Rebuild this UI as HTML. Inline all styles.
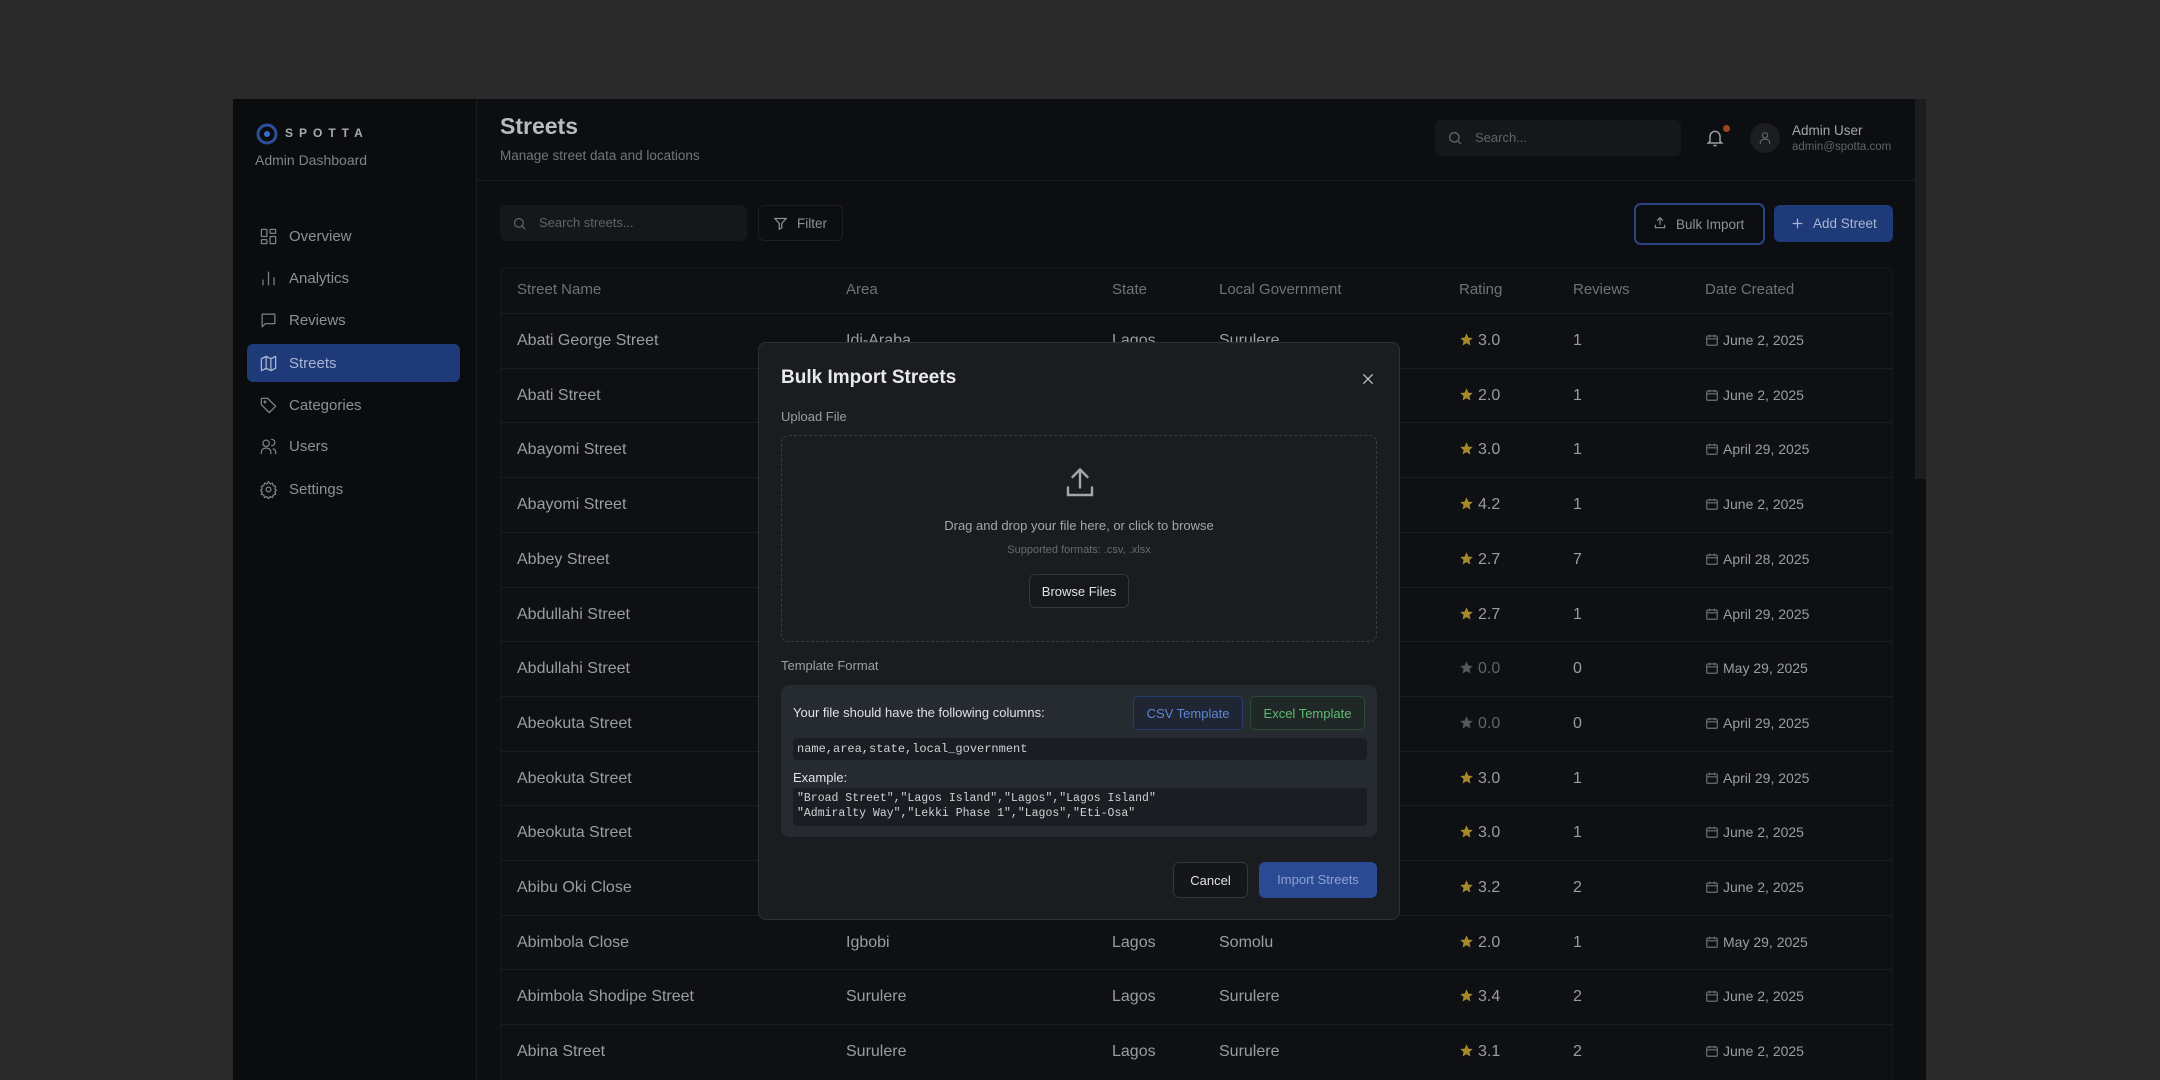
<!DOCTYPE html>
<html><head><meta charset="utf-8"><style>
*{box-sizing:border-box;margin:0;padding:0}
body{width:2160px;height:1080px;background:#2a2a2a;font-family:"Liberation Sans",sans-serif;position:relative;overflow:hidden}
.a{position:absolute}
.app{left:233px;top:99px;width:1693px;height:981px;background:#0d0e11;overflow:hidden}
.side{left:0;top:0;width:244px;height:981px;background:#0b0c0e;border-right:1px solid #1a1c20}
.nav{left:14px;width:213px;height:38px;border-radius:6px;color:#8d9097;font-size:15px;display:flex;align-items:center;padding-left:12px;gap:11px}
.nav svg{width:19px;height:19px;stroke:#7d8087;fill:none;stroke-width:1.6;stroke-linecap:round;stroke-linejoin:round}
.act{background:#1e3a78;color:#a9b6d2}
.act svg{stroke:#a9b6d2}
.t{color:#9a9da3;font-size:16px;white-space:nowrap}
.h{color:#6e727a;font-size:15px}
.row{left:267px;width:1393px;height:55px;border-top:1px solid #1a1c20}
.star{display:inline-block;width:15px;height:15px;vertical-align:-2px;margin-right:4px}
.cal{display:inline-block;width:14px;height:14px;vertical-align:-2px;margin-right:4px}
.m{left:758px;top:342px;width:642px;height:578px;background:#1a1c20;border:1px solid #2d3036;border-radius:8px}
.mono{font-family:"Liberation Mono",monospace;font-size:12.5px;color:#cfd2d6;white-space:nowrap}
.btn{white-space:nowrap}
</style></head><body>
<div class="a app">
 <div class="a side">
  <svg class="a" style="left:22px;top:23px" width="24" height="24" viewBox="0 0 24 24"><circle cx="12" cy="12" r="9" fill="none" stroke="#2c4f9c" stroke-width="3"/><circle cx="12" cy="12" r="3" fill="#3a6bd0"/></svg>
  <div class="a" style="left:52px;top:27px;color:#a8abb0;font-size:12px;font-weight:bold;letter-spacing:6px">SPOTTA</div>
  <div class="a" style="left:22px;top:53px;color:#7f838a;font-size:14px">Admin Dashboard</div>
  <div class="a nav" style="top:118px"><svg viewBox="0 0 24 24"><rect x="3" y="3" width="7" height="9" rx="1"/><rect x="14" y="3" width="7" height="5" rx="1"/><rect x="14" y="12" width="7" height="9" rx="1"/><rect x="3" y="16" width="7" height="5" rx="1"/></svg>Overview</div>
  <div class="a nav" style="top:160px"><svg viewBox="0 0 24 24"><path d="M5 20v-6M12 20V4M19 20v-9"/></svg>Analytics</div>
  <div class="a nav" style="top:202px"><svg viewBox="0 0 24 24"><path d="M4 4h16v12H8l-4 4z"/></svg>Reviews</div>
  <div class="a nav act" style="top:245px"><svg viewBox="0 0 24 24"><path d="M3 6l6-3 6 3 6-3v15l-6 3-6-3-6 3zM9 3v15M15 6v15"/></svg>Streets</div>
  <div class="a nav" style="top:287px"><svg viewBox="0 0 24 24"><path d="M3 3h8l10 10-8 8L3 11z"/><circle cx="7.5" cy="7.5" r="1"/></svg>Categories</div>
  <div class="a nav" style="top:328px"><svg viewBox="0 0 24 24"><circle cx="9" cy="8" r="4"/><path d="M3 21v-2a5 5 0 0 1 5-5h2a5 5 0 0 1 5 5v2M16 3a4 4 0 0 1 0 8M21 21v-2a4 4 0 0 0-3-4"/></svg>Users</div>
  <div class="a nav" style="top:371px"><svg viewBox="0 0 24 24"><circle cx="12" cy="12" r="3"/><path d="M12 2l2 3 3-1 1 3 3 1-1 3 2 2-2 2 1 3-3 1-1 3-3-1-2 3-2-3-3 1-1-3-3-1 1-3-2-2 2-2-1-3 3-1 1-3 3 1z"/></svg>Settings</div>
 </div>
 <div class="a" style="left:267px;top:14px;color:#b8bbc0;font-size:23px;font-weight:bold">Streets</div>
 <div class="a" style="left:267px;top:49px;color:#71757c;font-size:13.5px">Manage street data and locations</div>
 <div class="a" style="left:244px;top:81px;width:1449px;height:1px;background:#1a1c20"></div>
 <div class="a" style="left:1202px;top:21px;width:246px;height:36px;background:#15171a;border-radius:6px"></div>
 <svg class="a" style="left:1214px;top:31px" width="16" height="16" viewBox="0 0 24 24" fill="none" stroke="#5f636a" stroke-width="2"><circle cx="11" cy="11" r="7"/><path d="M16 16l5 5"/></svg>
 <div class="a" style="left:1242px;top:31px;color:#5f636a;font-size:13px">Search...</div>
 <svg class="a" style="left:1472px;top:29px" width="20" height="20" viewBox="0 0 24 24" fill="none" stroke="#9a9da3" stroke-width="1.8"><path d="M6 16V10a6 6 0 0 1 12 0v6l2 2H4zM10 21h4"/></svg>
 <div class="a" style="left:1490px;top:26px;width:7px;height:7px;border-radius:50%;background:#a0431f"></div>
 <div class="a" style="left:1517px;top:24px;width:30px;height:30px;border-radius:50%;background:#1b1d21"></div>
 <svg class="a" style="left:1524px;top:31px" width="16" height="16" viewBox="0 0 24 24" fill="none" stroke="#5f636a" stroke-width="1.8"><circle cx="12" cy="8" r="4"/><path d="M5 21v-2a5 5 0 0 1 5-5h4a5 5 0 0 1 5 5v2"/></svg>
 <div class="a" style="left:1559px;top:24px;color:#a3a6ab;font-size:13.5px">Admin User</div>
 <div class="a" style="left:1559px;top:42px;color:#5f636a;font-size:11.5px">admin@spotta.com</div>

 <div class="a" style="left:267px;top:106px;width:247px;height:36px;background:#15171a;border-radius:6px"></div>
 <svg class="a" style="left:279px;top:117px" width="15" height="15" viewBox="0 0 24 24" fill="none" stroke="#5f636a" stroke-width="2"><circle cx="11" cy="11" r="7"/><path d="M16 16l5 5"/></svg>
 <div class="a" style="left:306px;top:116px;color:#5f636a;font-size:13px">Search streets...</div>
 <div class="a" style="left:525px;top:106px;width:85px;height:36px;border:1px solid #1d1f23;border-radius:6px;color:#8d9097;font-size:13.5px;padding:10px 0 0 38px">Filter</div>
 <svg class="a" style="left:540px;top:117px" width="15" height="15" viewBox="0 0 24 24" fill="none" stroke="#8d9097" stroke-width="2"><path d="M3 4h18l-7 8v7l-4 2v-9z"/></svg>
 <div class="a btn" style="left:1401px;top:104px;width:131px;height:42px;border:2px solid #2a4580;border-radius:7px;background:#0c0d10;color:#8d9097;font-size:13.5px;padding:12px 0 0 40px">Bulk Import</div>
 <svg class="a" style="left:1420px;top:117px" width="14" height="14" viewBox="0 0 24 24" fill="none" stroke="#8d9097" stroke-width="2"><path d="M12 15V3M7 8l5-5 5 5M4 15v5h16v-5"/></svg>
 <div class="a btn" style="left:1541px;top:106px;width:119px;height:37px;background:#1e3a78;border-radius:6px;color:#a9b6d2;font-size:13.5px;padding:11px 0 0 39px">Add Street</div>
 <svg class="a" style="left:1558px;top:118px" width="13" height="13" viewBox="0 0 24 24" fill="none" stroke="#a9b6d2" stroke-width="2.2"><path d="M12 3v18M3 12h18"/></svg>

 <div class="a" style="left:267px;top:168px;width:1393px;height:820px;background:#0f1013;border:1px solid #17191c;border-radius:6px"></div>
 <div class="a h" style="left:284px;top:182px">Street Name</div>
 <div class="a h" style="left:613px;top:182px">Area</div>
 <div class="a h" style="left:879px;top:182px">State</div>
 <div class="a h" style="left:986px;top:182px">Local Government</div>
 <div class="a h" style="left:1226px;top:182px">Rating</div>
 <div class="a h" style="left:1340px;top:182px">Reviews</div>
 <div class="a h" style="left:1472px;top:182px">Date Created</div>
 <div id="rows"></div>
</div>

<div class="a m">
 <div class="a" style="left:22px;top:24px;color:#e8e9eb;font-size:19px;font-weight:bold">Bulk Import Streets</div>
 <svg class="a" style="left:601px;top:28px" width="16" height="16" viewBox="0 0 24 24" fill="none" stroke="#b8bbc0" stroke-width="2"><path d="M5 5l14 14M19 5L5 19"/></svg>
 <div class="a" style="left:22px;top:66px;color:#9a9da3;font-size:13px">Upload File</div>
 <div class="a" style="left:22px;top:92px;width:596px;height:207px;border:1.5px dashed #3a3d43;border-radius:8px"></div>
 <svg class="a" style="left:303px;top:122px" width="36" height="36" viewBox="0 0 24 24" fill="none" stroke="#a3a6ab" stroke-width="1.6" stroke-linecap="round"><path d="M12 15V3M7 8l5-5 5 5M4 15v5h16v-5"/></svg>
 <div class="a" style="left:0;width:640px;top:175px;text-align:center;color:#a3a6ab;font-size:13px">Drag and drop your file here, or click to browse</div>
 <div class="a" style="left:0;width:640px;top:201px;text-align:center;color:#676b72;font-size:11px">Supported formats: .csv, .xlsx</div>
 <div class="a btn" style="left:270px;top:231px;width:100px;height:34px;border:1px solid #33363c;border-radius:6px;background:#16181b;color:#e0e1e3;font-size:13px;text-align:center;padding-top:9px">Browse Files</div>
 <div class="a" style="left:22px;top:315px;color:#9a9da3;font-size:13px">Template Format</div>
 <div class="a" style="left:22px;top:342px;width:596px;height:152px;background:#262a31;border-radius:8px"></div>
 <div class="a" style="left:34px;top:362px;color:#e0e1e3;font-size:13px">Your file should have the following columns:</div>
 <div class="a btn" style="left:374px;top:353px;width:110px;height:34px;border:1px solid #273d6b;border-radius:5px;background:#1f2532;color:#5f86d6;font-size:13px;text-align:center;padding-top:9px">CSV Template</div>
 <div class="a btn" style="left:491px;top:353px;width:115px;height:34px;border:1px solid #2c4a35;border-radius:5px;background:#1f2826;color:#5fbb72;font-size:13px;text-align:center;padding-top:9px">Excel Template</div>
 <div class="a mono" style="left:34px;top:395px;width:574px;height:22px;background:#1a1d22;border-radius:4px;padding:4px 4px;font-size:12px">name,area,state,local_government</div>
 <div class="a" style="left:34px;top:427px;color:#e0e1e3;font-size:13px">Example:</div>
 <div class="a mono" style="left:34px;top:445px;width:574px;height:38px;background:#1a1d22;border-radius:4px;padding:3px 4px;line-height:15px;font-size:11.5px">"Broad Street","Lagos Island","Lagos","Lagos Island"<br>"Admiralty Way","Lekki Phase 1","Lagos","Eti-Osa"</div>
 <div class="a btn" style="left:414px;top:519px;width:75px;height:36px;border:1px solid #33363c;border-radius:6px;background:#141619;color:#e0e1e3;font-size:13px;text-align:center;padding-top:10px">Cancel</div>
 <div class="a btn" style="left:500px;top:519px;width:118px;height:36px;border-radius:6px;background:#2a4b94;color:#8ea3cf;font-size:13px;text-align:center;padding-top:10px">Import Streets</div>
</div>

<script>
const d=[["Abati George Street","Idi-Araba","Lagos","Surulere","3.0","1","June 2, 2025"],
["Abati Street","","","","2.0","1","June 2, 2025"],
["Abayomi Street","","","","3.0","1","April 29, 2025"],
["Abayomi Street","","","","4.2","1","June 2, 2025"],
["Abbey Street","","","","2.7","7","April 28, 2025"],
["Abdullahi Street","","","","2.7","1","April 29, 2025"],
["Abdullahi Street","","","","0.0","0","May 29, 2025"],
["Abeokuta Street","","","","0.0","0","April 29, 2025"],
["Abeokuta Street","","","","3.0","1","April 29, 2025"],
["Abeokuta Street","","","","3.0","1","June 2, 2025"],
["Abibu Oki Close","","","","3.2","2","June 2, 2025"],
["Abimbola Close","Igbobi","Lagos","Somolu","2.0","1","May 29, 2025"],
["Abimbola Shodipe Street","Surulere","Lagos","Surulere","3.4","2","June 2, 2025"],
["Abina Street","Surulere","Lagos","Surulere","3.1","2","June 2, 2025"]];
let h="";
d.forEach((r,i)=>{const y=214+i*54.7;const c=r[4]=="0.0"?"#55585e":"#a68a2a";
h+=`<div class="a row" style="top:${y}px"></div>
<div class="a t" style="left:284px;top:${y+19}px">${r[0]}</div>
<div class="a t" style="left:613px;top:${y+19}px">${r[1]}</div>
<div class="a t" style="left:879px;top:${y+19}px">${r[2]}</div>
<div class="a t" style="left:986px;top:${y+19}px">${r[3]}</div>
<div class="a t" style="left:1226px;top:${y+19}px;color:${r[4]=="0.0"?"#5f636a":"#9a9da3"}"><svg class="star" viewBox="0 0 24 24"><path fill="${c}" d="M12 2l3 7 7 .6-5.3 4.7 1.6 7.2L12 17.8 5.7 21.5l1.6-7.2L2 9.6 9 9z"/></svg>${r[4]}</div>
<div class="a t" style="left:1340px;top:${y+19}px">${r[5]}</div>
<div class="a t" style="left:1472px;top:${y+19}px;font-size:14px"><svg class="cal" viewBox="0 0 24 24" fill="none" stroke="#6e727a" stroke-width="2"><rect x="3" y="5" width="18" height="16" rx="2"/><path d="M3 10h18M8 3v4M16 3v4"/></svg>${r[6]}</div>`});
document.getElementById("rows").innerHTML=h;
</script>
<div class="a" style="left:1915px;top:99px;width:11px;height:380px;background:#1c1d20"></div>
</body></html>
